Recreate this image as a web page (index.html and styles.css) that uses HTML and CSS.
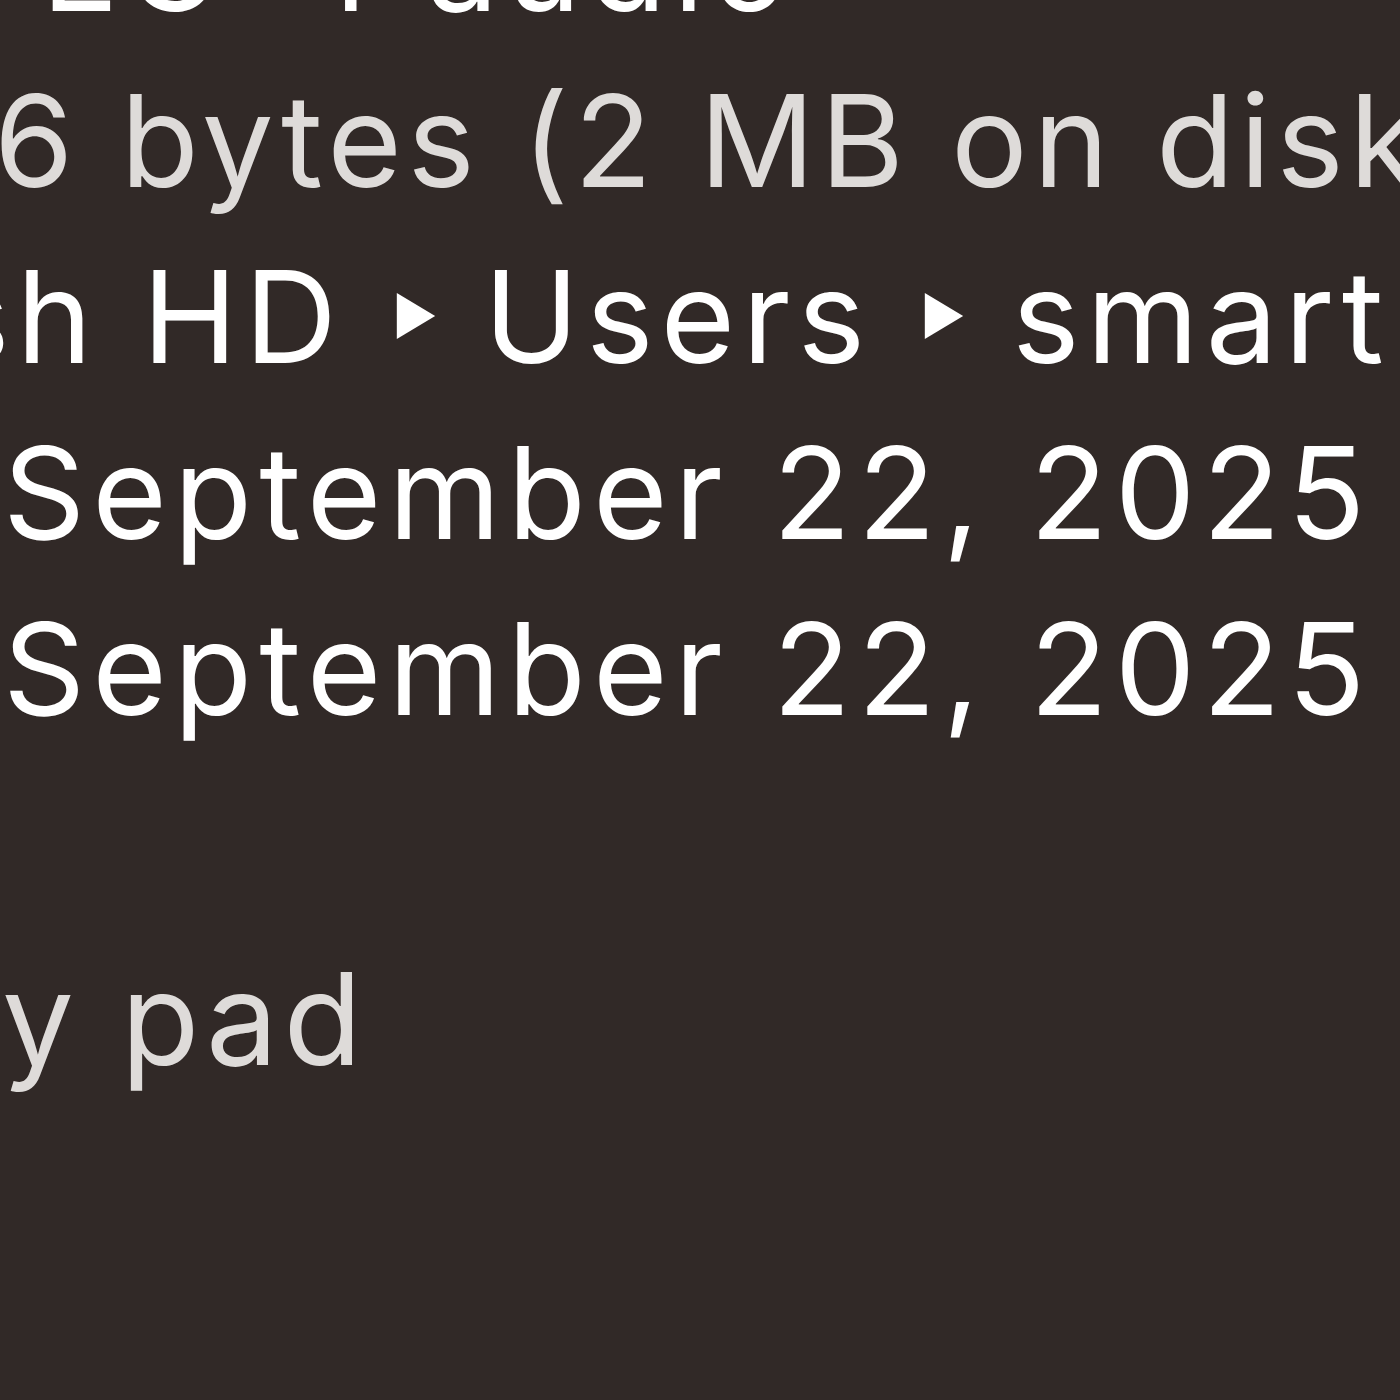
FILE: index.html
```html
<!DOCTYPE html>
<html lang="en">
<head>
    <meta charset="UTF-8">
    <title>Info</title>
    <link rel="stylesheet" href="styles.css">
</head>
<body>
    <div class="info">
        <div class="row row-kind">MPEG-4 audio</div>
        <div class="row row-size dim">6 bytes (2 MB on disk)</div>
        <div class="row row-where">sh HD<svg class="arrow" viewBox="0 0 10 12"><path d="M0 0 L10 6 L0 12 Z"/></svg>Users<svg class="arrow" viewBox="0 0 10 12"><path d="M0 0 L10 6 L0 12 Z"/></svg>smart</div>
        <div class="row row-date">September 22, 2025</div>
        <div class="row row-date">September 22, 2025</div>
        <div class="row row-check dim">y pad</div>
    </div>
</body>
</html>
```

FILE: styles.css
```css
/* Info panel, zoomed */
body {
    margin: 0;
    padding: 0;
    background: #312927;
    overflow: hidden;
    font-family: "Inter", "Noto Sans", sans-serif;
}

.info {
    margin-top: -123px;
    width: 1400px;
    overflow: hidden;
    filter: blur(0.6px);
}

.row {
    font-size: 128px;
    line-height: 176px;
    height: 176px;
    color: #fff;
    white-space: nowrap;
    letter-spacing: 7px;
}

/* secondary labels are a touch greyer and tighter */
.dim {
    color: #dedbd9;
    letter-spacing: 5.5px;
}

.row-kind {
    margin-left: -170px;
}

.row-size {
    margin-left: -6px;
}

.row-where {
    margin-left: -58px;
}

.row-date {
    margin-left: 3px;
}

.row-check {
    margin-top: 174px;
    margin-left: 2px;
}

.arrow {
    width: 40px;
    height: 46px;
    fill: #fff;
    margin: 0 48px 0 52px;
    vertical-align: 24px;
}
```
